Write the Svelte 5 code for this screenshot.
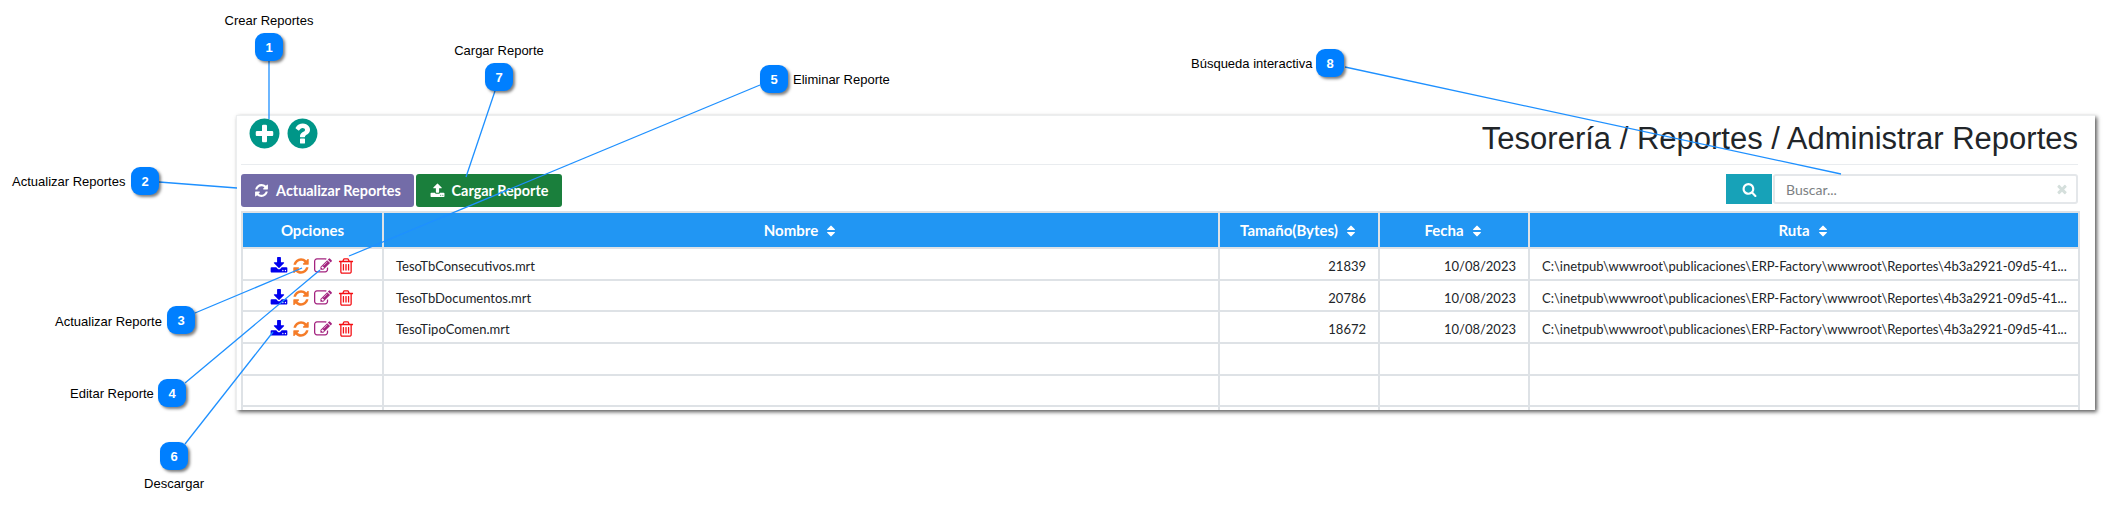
<script>
	const ruta = 'C:\\inetpub\\wwwroot\\publicaciones\\ERP-Factory\\wwwroot\\Reportes\\4b3a2921-09d5-41...';

	const filas = [
		{ nombre: 'TesoTbConsecutivos.mrt', bytes: 21839, fecha: '10/08/2023', ruta },
		{ nombre: 'TesoTbDocumentos.mrt', bytes: 20786, fecha: '10/08/2023', ruta },
		{ nombre: 'TesoTipoComen.mrt', bytes: 18672, fecha: '10/08/2023', ruta },
		{},
		{},
		{}
	];

	const columnas = [
		{ titulo: 'Nombre', ancho: 836 },
		{ titulo: 'Tamaño(Bytes)', ancho: 160 },
		{ titulo: 'Fecha', ancho: 150 },
		{ titulo: 'Ruta', ancho: 550 }
	];

	// badge = esquina superior izquierda, label = posicion del texto, linea = x1 y1 x2 y2
	const notas = [
		{ n: 1, x: 255, y: 33, texto: 'Crear Reportes', tx: 269, ty: 20, centro: true, linea: [269, 61, 269, 119] },
		{ n: 2, x: 131, y: 167, texto: 'Actualizar Reportes', tx: 12, ty: 181, linea: [159, 182, 237, 188] },
		{ n: 3, x: 167, y: 306, texto: 'Actualizar Reporte', tx: 55, ty: 321, linea: [195, 313, 302, 268] },
		{ n: 4, x: 158, y: 379, texto: 'Editar Reporte', tx: 70, ty: 393, linea: [185, 383, 320, 270] },
		{ n: 5, x: 760, y: 65, texto: 'Eliminar Reporte', tx: 793, ty: 79, linea: [760, 85, 349, 256] },
		{ n: 6, x: 160, y: 442, texto: 'Descargar', tx: 174, ty: 483, centro: true, linea: [185, 444, 273, 332] },
		{ n: 7, x: 485, y: 63, texto: 'Cargar Reporte', tx: 499, ty: 50, centro: true, linea: [495, 91, 466, 177] },
		{ n: 8, x: 1316, y: 49, texto: 'Búsqueda interactiva', tx: 1191, ty: 63, linea: [1345, 67, 1841, 174] }
	];

	// glifos de font-awesome 4
	const iconos = {
		plus: 'M1344 960v-128q0-26-19-45t-45-19h-256v-256q0-26-19-45t-45-19h-128q-26 0-45 19t-19 45v256h-256q-26 0-45 19t-19 45v128q0 26 19 45t45 19h256v256q0 26 19 45t45 19h128q26 0 45-19t19-45v-256h256q26 0 45-19t19-45zm320-64q0 209-103 385.5t-279.5 279.5-385.5 103-385.5-103-279.5-279.5-103-385.5 103-385.5 279.5-279.5 385.5-103 385.5 103 279.5 279.5 103 385.5z',
		help: 'M1024 1376v-192q0-14-9-23t-23-9h-192q-14 0-23 9t-9 23v192q0 14 9 23t23 9h192q14 0 23-9t9-23zm256-672q0-88-55.5-163t-138.5-116-170-41q-243 0-371 213-15 24 8 42l132 100q7 6 19 6 16 0 25-12 53-68 86-92 34-24 86-24 48 0 85.5 26t37.5 59q0 38-20 61t-68 45q-63 28-115.5 86.5t-52.5 125.5v36q0 14 9 23t23 9h192q14 0 23-9t9-23q0-19 21.5-49.5t54.5-49.5q32-18 49-28.5t46-35 44.5-48 28-60.5 12.5-81zm384 192q0 209-103 385.5t-279.5 279.5-385.5 103-385.5-103-279.5-279.5-103-385.5 103-385.5 279.5-279.5 385.5-103 385.5 103 279.5 279.5 103 385.5z',
		refresh: 'M1639 1056q0 5-1 7-64 268-268 434.5t-478 166.5q-146 0-282.5-55t-243.5-157l-129 129q-19 19-45 19t-45-19-19-45v-448q0-26 19-45t45-19h448q26 0 45 19t19 45-19 45l-137 137q71 66 161 102t187 36q134 0 250-65t186-179q11-17 53-117 8-23 30-23h192q13 0 22.5 9.5t9.5 22.5zm25-800v448q0 26-19 45t-45 19h-448q-26 0-45-19t-19-45 19-45l138-138q-148-137-349-137-134 0-250 65t-186 179q-11 17-53 117-8 23-30 23h-199q-13 0-22.5-9.5t-9.5-22.5v-7q65-268 270-434.5t480-166.5q146 0 284 55.5t245 156.5l130-129q19-19 45-19t45 19 19 45z',
		edit: 'M888 1184l116-116-152-152-116 116v56h96v96h56zm440-720q-16-16-33 1l-350 350q-17 17-1 33t33-1l350-350q17-17 1-33zm80 594v190q0 119-84.5 203.5t-203.5 84.5h-832q-119 0-203.5-84.5t-84.5-203.5v-832q0-119 84.5-203.5t203.5-84.5h832q63 0 117 25 15 7 18 23 3 17-9 29l-49 49q-14 14-32 8-23-6-45-6h-832q-66 0-113 47t-47 113v832q0 66 47 113t113 47h832q66 0 113-47t47-113v-126q0-13 9-22l64-64q15-15 35-7t20 29zm-96-738l288 288-672 672h-288v-288zm444 132l-92 92-288-288 92-92q28-28 68-28t68 28l152 152q28 28 28 68t-28 68z',
		trash: 'M704 736v576q0 14-9 23t-23 9h-64q-14 0-23-9t-9-23v-576q0-14 9-23t23-9h64q14 0 23 9t9 23zm256 0v576q0 14-9 23t-23 9h-64q-14 0-23-9t-9-23v-576q0-14 9-23t23-9h64q14 0 23 9t9 23zm256 0v576q0 14-9 23t-23 9h-64q-14 0-23-9t-9-23v-576q0-14 9-23t23-9h64q14 0 23 9t9 23zm128 724v-948h-896v948q0 22 7 40.5t14.5 27 10.5 8.5h832q3 0 10.5-8.5t14.5-27 7-40.5zm-672-1076h448l-48-117q-7-9-17-11h-317q-10 2-17 11zm928 32v64q0 14-9 23t-23 9h-96v948q0 83-47 143.5t-113 60.5h-832q-66 0-113-58.5t-47-141.5v-952h-96q-14 0-23-9t-9-23v-64q0-14 9-23t23-9h309l70-167q15-37 54-63t79-26h320q40 0 79 26t54 63l70 167h309q14 0 23 9t9 23z',
		download: 'M1344 1344q0-26-19-45t-45-19-45 19-19 45 19 45 45 19 45-19 19-45zm256 0q0-26-19-45t-45-19-45 19-19 45 19 45 45 19 45-19 19-45zm128-224v320q0 40-28 68t-68 28h-1472q-40 0-68-28t-28-68v-320q0-40 28-68t68-28h465l135 136q58 56 136 56t136-56l136-136h464q40 0 68 28t28 68zm-325-569q17 41-14 70l-448 448q-18 19-45 19t-45-19l-448-448q-31-29-14-70 17-39 59-39h256v-448q0-26 19-45t45-19h256q26 0 45 19t19 45v448h256q42 0 59 39z',
		upload: 'M1344 1472q0-26-19-45t-45-19-45 19-19 45 19 45 45 19 45-19 19-45zm256 0q0-26-19-45t-45-19-45 19-19 45 19 45 45 19 45-19 19-45zm128-224v320q0 40-28 68t-68 28h-1472q-40 0-68-28t-28-68v-320q0-40 28-68t68-28h427q21 56 70.5 92t110.5 36h256q61 0 110.5-36t70.5-92h427q40 0 68 28t28 68zm-325-648q-17 40-59 40h-256v448q0 26-19 45t-45 19h-256q-26 0-45-19t-19-45v-448h-256q-42 0-59-40-17-39 14-69l448-448q18-19 45-19t45 19l448 448q31 30 14 69z',
		search: 'M1216 832q0-185-131.5-316.5t-316.5-131.5-316.5 131.5-131.5 316.5 131.5 316.5 316.5 131.5 316.5-131.5 131.5-316.5zm512 832q0 52-38 90t-90 38q-54 0-90-38l-343-342q-179 124-399 124-143 0-273.5-55.5t-225-150-150-225-55.5-273.5 55.5-273.5 150-225 225-150 273.5-55.5 273.5 55.5 225 150 150 225 55.5 273.5q0 220-124 399l343 343q37 37 37 90z',
		close: 'M1490 1322q0 40-28 68l-136 136q-28 28-68 28t-68-28l-294-294-294 294q-28 28-68 28t-68-28l-136-136q-28-28-28-68t28-68l294-294-294-294q-28-28-28-68t28-68l136-136q28-28 68-28t68 28l294 294 294-294q28-28 68-28t68 28l136 136q28 28 28 68t-28 68l-294 294 294 294q28 28 28 68z',
		sort: 'M1408 1088q0 26-19 45l-448 448q-19 19-45 19t-45-19l-448-448q-19-19-19-45t19-45 45-19h896q26 0 45 19t19 45zm0-384q0 26-19 45t-45 19h-896q-26 0-45-19t-19-45 19-45l448-448q19-19 45-19t45 19l448 448q19 19 19 45z'
	};
</script>

{#snippet icono(nombre, clase)}
	<svg class={clase} viewBox="0 0 1792 1792" aria-hidden="true"><path d={iconos[nombre]} /></svg>
{/snippet}

<div class="pagina">
	<section class="panel">
		<header class="cabecera">
			<div class="acciones">
				{@render icono('plus', 'redondo')}
				{@render icono('help', 'redondo')}
			</div>
			<h1>Tesorería / Reportes / Administrar Reportes</h1>
		</header>

		<div class="barra">
			<button class="btn morado">{@render icono('refresh', 'btn-ico')}Actualizar Reportes</button>
			<button class="btn verde">{@render icono('upload', 'btn-ico')}Cargar Reporte</button>
			<div class="busqueda">
				<span class="lupa">{@render icono('search', 'lupa-ico')}</span>
				<div class="entrada">
					<input placeholder="Buscar..." />
					{@render icono('close', 'cerrar')}
				</div>
			</div>
		</div>

		<table>
			<colgroup>
				<col style="width: 141px" />
				{#each columnas as c}
					<col style="width: {c.ancho}px" />
				{/each}
			</colgroup>
			<thead>
				<tr>
					<th>Opciones</th>
					{#each columnas as c}
						<th>{c.titulo}{@render icono('sort', 'orden')}</th>
					{/each}
				</tr>
			</thead>
			<tbody>
				{#each filas as f}
					<tr>
						<td class="opciones">
							{#if f.nombre}
								{@render icono('download', 'op azul')}
								{@render icono('refresh', 'op naranja')}
								{@render icono('edit', 'op magenta')}
								{@render icono('trash', 'op rojo')}
							{/if}
						</td>
						<td>{f.nombre ?? ''}</td>
						<td class="der">{f.bytes ?? ''}</td>
						<td class="der">{f.fecha ?? ''}</td>
						<td>{f.ruta ?? ''}</td>
					</tr>
				{/each}
			</tbody>
		</table>
	</section>

	<svg class="lineas" width="2104" height="507" aria-hidden="true">
		{#each notas as nota}
			<line x1={nota.linea[0]} y1={nota.linea[1]} x2={nota.linea[2]} y2={nota.linea[3]} />
		{/each}
	</svg>

	{#each notas as nota}
		<span class="insignia" style="left: {nota.x}px; top: {nota.y}px">{nota.n}</span>
		<span class="etiqueta" class:centro={nota.centro} style="left: {nota.tx}px; top: {nota.ty}px">{nota.texto}</span>
	{/each}
</div>

<style>
	:global(body) {
		margin: 0;
		background: #fff;
	}

	.pagina {
		position: relative;
		width: 2104px;
		height: 507px;
		padding: 115px 0 0 236px;
		box-sizing: border-box;
		overflow: hidden;
		font-family: Lato, 'Liberation Sans', sans-serif;
	}

	.panel {
		width: 1859px;
		height: 295px;
		box-sizing: border-box;
		padding: 0 17px 0 4px;
		overflow: hidden;
		background: #fff;
		border-top: 1px solid #eceeef;
		border-left: 1px solid #eceeef;
		box-shadow: 2px 2px 4px rgba(0, 0, 0, 0.65);
	}

	.cabecera {
		display: flex;
		justify-content: space-between;
		height: 49px;
		box-sizing: border-box;
		border-bottom: 1px solid #e9ecef;
	}

	.acciones {
		display: flex;
		gap: 3px;
		padding: 0 0 0 6px;
	}

	.redondo {
		width: 35px;
		height: 35px;
		fill: #009688;
	}

	h1 {
		margin: 5px 0 0;
		font: 400 31px/36px 'Liberation Sans', Arial, sans-serif;
		color: #212529;
	}

	.barra {
		display: flex;
		align-items: flex-start;
		gap: 2px;
		margin-top: 9px;
		height: 33px;
	}

	.btn {
		display: flex;
		align-items: center;
		justify-content: center;
		height: 33px;
		border: 0;
		border-radius: 3px;
		padding: 0;
		color: #fff;
		font: 700 14.4px Lato, sans-serif;
	}

	.morado {
		width: 173px;
		background: #736ca8;
	}

	.verde {
		width: 146px;
		background: #1a7f3c;
	}

	.btn-ico {
		width: 15px;
		height: 15px;
		margin-right: 7px;
		fill: #fff;
	}

	.busqueda {
		display: flex;
		margin-left: auto;
		height: 30px;
		gap: 1px;
	}

	.lupa {
		display: flex;
		align-items: center;
		justify-content: center;
		width: 46px;
		background: #17a2b8;
	}

	.lupa-ico {
		width: 15px;
		height: 15px;
		fill: #fff;
	}

	.entrada {
		display: flex;
		align-items: center;
		width: 305px;
		box-sizing: border-box;
		border: 2px solid #e4e7ea;
		border-radius: 3px;
		background: #fff;
	}

	input {
		flex: 1;
		min-width: 0;
		border: 0;
		outline: 0;
		padding: 0 0 0 11px;
		font: 400 14px Lato, sans-serif;
	}

	input::placeholder {
		color: #7c7f83;
	}

	.cerrar {
		width: 14px;
		height: 14px;
		margin-right: 7px;
		fill: #d5dfdc;
	}

	table {
		width: 1837px;
		margin-top: 4px;
		border-collapse: collapse;
		table-layout: fixed;
		font-size: 13px;
		color: #212529;
	}

	th {
		box-sizing: border-box;
		height: 36px;
		padding: 0;
		background: #2196f3;
		color: #fff;
		font-weight: 700;
		font-size: 15px;
		text-align: center;
		border: 2px solid #dee2e6;
	}

	td {
		box-sizing: border-box;
		height: 31.7px;
		padding: 4px 12px 0;
		border: 2px solid #dee2e6;
		white-space: nowrap;
		overflow: hidden;
	}

	.der {
		text-align: right;
	}

	.opciones {
		padding: 4px 0 0;
		text-align: center;
		font-size: 0;
	}

	.orden {
		width: 14px;
		height: 14px;
		margin-left: 6px;
		vertical-align: -2px;
		fill: #fff;
	}

	.op {
		width: 18px;
		height: 18px;
		margin: 0 2px;
		vertical-align: middle;
	}

	.azul { fill: #0000ee; }
	.naranja { fill: #f57c28; }
	.magenta { fill: #a3237f; margin-right: 3px; }
	.rojo { fill: #f40f14; }

	.lineas {
		position: absolute;
		left: 0;
		top: 0;
		pointer-events: none;
	}

	line {
		stroke: #1e90ff;
		stroke-width: 1.3;
	}

	.insignia {
		position: absolute;
		display: flex;
		align-items: center;
		justify-content: center;
		width: 28px;
		height: 28px;
		border-radius: 9px;
		background: #007fff;
		color: #fff;
		font: 700 13px 'Liberation Sans', sans-serif;
		box-shadow: 2px 2px 3px rgba(0, 0, 0, 0.5);
	}

	.etiqueta {
		position: absolute;
		transform: translateY(-50%);
		color: #000;
		font: 400 13px 'Liberation Sans', sans-serif;
		white-space: nowrap;
	}

	.etiqueta.centro {
		transform: translate(-50%, -50%);
	}
</style>
